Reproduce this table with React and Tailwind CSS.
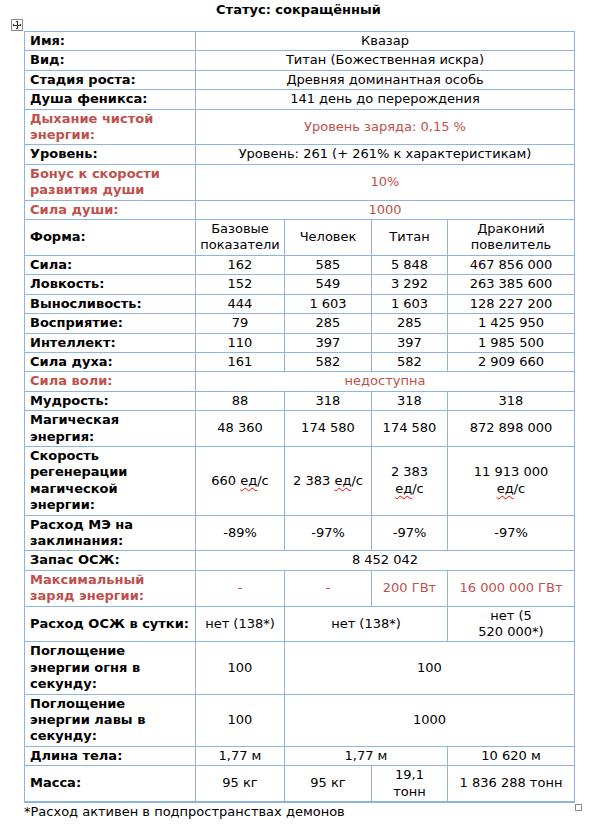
import React from "react";

const B = "border border-[#8eb4e3]";
const L = `${B} pl-[5px] pr-[3px] py-px font-bold text-left align-middle`;
const C = `${B} px-[3px] py-px text-center align-middle`;
const RED = "text-[#c0504d]";

function Ed() {
  return <span className="underline decoration-wavy decoration-[#ff0000] decoration-1 underline-offset-2">ед</span>;
}

function MoveIcon() {
  return (
    <svg width="12" height="12" viewBox="0 0 12 12" className="absolute left-[-13px] top-[-12px]">
      <rect x="0.5" y="0.5" width="11" height="11" fill="white" stroke="#8a8a8a" />
      <g stroke="#333" strokeWidth="1" fill="none" shapeRendering="crispEdges">
        <line x1="6" y1="2" x2="6" y2="10" />
        <line x1="2" y1="6" x2="10" y2="6" />
      </g>
      <g fill="#333">
        <path d="M6 1.5 L4.5 3.2 L7.5 3.2 Z" />
        <path d="M6 10.5 L4.5 8.8 L7.5 8.8 Z" />
        <path d="M1.5 6 L3.2 4.5 L3.2 7.5 Z" />
        <path d="M10.5 6 L8.8 4.5 L8.8 7.5 Z" />
      </g>
    </svg>
  );
}

export default function App() {
  return (
    <div className="w-[599px] h-[837px] bg-white text-black text-[13px] leading-[16.4px] font-['DejaVu_Sans','Verdana',sans-serif]">
      <div className="ml-[24px] w-[549px] pt-[2px] h-[31px] text-center font-bold">Статус: сокращённый</div>
      <div className="relative ml-[24px] w-[550px]">
        <MoveIcon />
        <table className="table-fixed border-collapse w-[550px] border-b-2 border-b-[#8eb4e3]">
          <colgroup>
            <col className="w-[171px]" />
            <col className="w-[89px]" />
            <col className="w-[87px]" />
            <col className="w-[76px]" />
            <col className="w-[127px]" />
          </colgroup>
          <tbody>
            <tr><td className={L}>Имя:</td><td className={C} colSpan={4}>Квазар</td></tr>
            <tr><td className={L}>Вид:</td><td className={C} colSpan={4}>Титан (Божественная искра)</td></tr>
            <tr><td className={L}>Стадия роста:</td><td className={C} colSpan={4}>Древняя доминантная особь</td></tr>
            <tr><td className={L}>Душа феникса:</td><td className={C} colSpan={4}>141 день до перерождения</td></tr>
            <tr><td className={`${L} ${RED}`}>Дыхание чистой<br />энергии:</td><td className={`${C} ${RED}`} colSpan={4}>Уровень заряда: 0,15 %</td></tr>
            <tr><td className={L}>Уровень:</td><td className={C} colSpan={4}>Уровень: 261 (+ 261% к характеристикам)</td></tr>
            <tr><td className={`${L} ${RED} py-[5px]`}>Бонус к скорости<br />развития души</td><td className={`${C} ${RED}`} colSpan={4}>10%</td></tr>
            <tr><td className={`${L} ${RED}`}>Сила души:</td><td className={`${C} ${RED}`} colSpan={4}>1000</td></tr>
            <tr><td className={L}>Форма:</td><td className={C}>Базовые показатели</td><td className={C}>Человек</td><td className={C}>Титан</td><td className={C}>Драконий повелитель</td></tr>
            <tr><td className={L}>Сила:</td><td className={C}>162</td><td className={C}>585</td><td className={C}>5 848</td><td className={C}>467 856 000</td></tr>
            <tr><td className={L}>Ловкость:</td><td className={C}>152</td><td className={C}>549</td><td className={C}>3 292</td><td className={C}>263 385 600</td></tr>
            <tr><td className={L}>Выносливость:</td><td className={C}>444</td><td className={C}>1 603</td><td className={C}>1 603</td><td className={C}>128 227 200</td></tr>
            <tr><td className={L}>Восприятие:</td><td className={C}>79</td><td className={C}>285</td><td className={C}>285</td><td className={C}>1 425 950</td></tr>
            <tr><td className={L}>Интеллект:</td><td className={C}>110</td><td className={C}>397</td><td className={C}>397</td><td className={C}>1 985 500</td></tr>
            <tr><td className={L}>Сила духа:</td><td className={C}>161</td><td className={C}>582</td><td className={C}>582</td><td className={C}>2 909 660</td></tr>
            <tr><td className={`${L} ${RED}`}>Сила воли:</td><td className={`${C} ${RED}`} colSpan={4}>недоступна</td></tr>
            <tr><td className={L}>Мудрость:</td><td className={C}>88</td><td className={C}>318</td><td className={C}>318</td><td className={C}>318</td></tr>
            <tr><td className={L}>Магическая<br />энергия:</td><td className={C}>48 360</td><td className={C}>174 580</td><td className={C}>174 580</td><td className={C}>872 898 000</td></tr>
            <tr>
              <td className={L}>Скорость<br />регенерации<br />магической<br />энергии:</td>
              <td className={C}>660 <Ed />/с</td>
              <td className={C}>2 383 <Ed />/с</td>
              <td className={C}>2 383<br /><Ed />/с</td>
              <td className={C}>11 913 000<br /><Ed />/с</td>
            </tr>
            <tr><td className={L}>Расход МЭ на<br />заклинания:</td><td className={C}>-89%</td><td className={C}>-97%</td><td className={C}>-97%</td><td className={C}>-97%</td></tr>
            <tr><td className={L}>Запас ОСЖ:</td><td className={C} colSpan={4}>8 452 042</td></tr>
            <tr><td className={`${L} ${RED}`}>Максимальный<br />заряд энергии:</td><td className={`${C} ${RED}`}>-</td><td className={`${C} ${RED}`}>-</td><td className={`${C} ${RED}`}>200 ГВт</td><td className={`${C} ${RED}`}>16 000 000 ГВт</td></tr>
            <tr><td className={L}>Расход ОСЖ в сутки:</td><td className={C}>нет (138*)</td><td className={C} colSpan={2}>нет (138*)</td><td className={C}>нет (5<br />520 000*)</td></tr>
            <tr><td className={L}>Поглощение<br />энергии огня в<br />секунду:</td><td className={C}>100</td><td className={C} colSpan={3}>100</td></tr>
            <tr><td className={L}>Поглощение<br />энергии лавы в<br />секунду:</td><td className={C}>100</td><td className={C} colSpan={3}>1000</td></tr>
            <tr><td className={L}>Длина тела:</td><td className={C}>1,77 м</td><td className={C} colSpan={2}>1,77 м</td><td className={C}>10 620 м</td></tr>
            <tr><td className={L}>Масса:</td><td className={C}>95 кг</td><td className={C}>95 кг</td><td className={C}>19,1<br />тонн</td><td className={C}>1 836 288 тонн</td></tr>
          </tbody>
        </table>
        <div className="absolute right-[-8px] bottom-[-8px] w-[7px] h-[7px] border border-[#8a8a8a] bg-white"></div>
      </div>
      <div className="ml-[24px] pt-[1px]">*Расход активен в подпространствах демонов</div>
    </div>
  );
}
